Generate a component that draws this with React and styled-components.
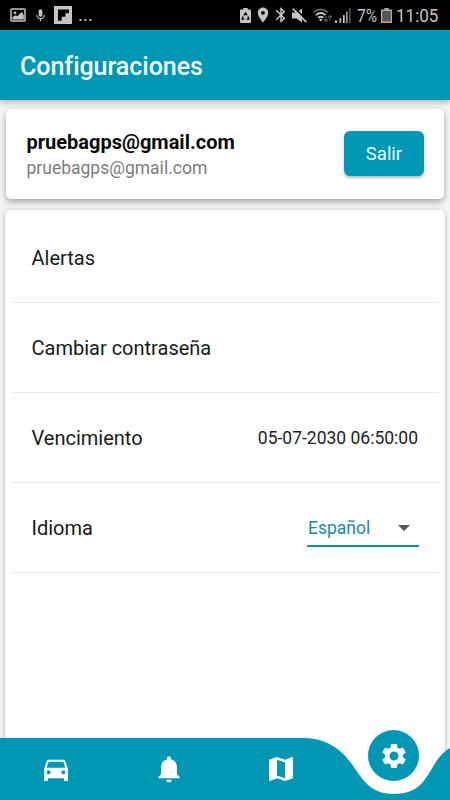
import React from "react";
import styled, { createGlobalStyle } from "styled-components";
import {
  MdDirectionsCar,
  MdNotifications,
  MdMap,
  MdSettings,
  MdLocationOn,
  MdBluetooth,
  MdMic,
} from "react-icons/md";

const TEAL = "#0097b5";

const GlobalStyle = createGlobalStyle`
  * { box-sizing: border-box; }
  body { margin: 0; overflow: hidden; font-family: Roboto, sans-serif; }
`;

const Screen = styled.div`
  width: 450px;
  height: 800px;
  display: flex;
  flex-direction: column;
  background: #f4f4f4;
  position: relative;
  overflow: hidden;
`;

const StatusBar = styled.div`
  height: 30px;
  flex: none;
  display: flex;
  align-items: center;
  justify-content: space-between;
  padding: 0 12px 0 10px;
  background: #000;
  color: #c4c4c4;
`;

const StatusGroup = styled.div`
  display: flex;
  align-items: center;
  height: 30px;
`;

const Glyph = styled.span`
  display: flex;
  align-items: center;
  justify-content: center;
  flex: none;
  width: ${(p) => p.$w}px;
  margin-left: ${(p) => p.$gap || 0}px;
  svg { flex: none; display: block; }
`;

const StatusText = styled.span`
  display: block;
  width: ${(p) => p.$w}px;
  margin-left: ${(p) => p.$gap || 0}px;
  padding-top: 2px;
  font-size: 18.5px;
  line-height: 30px;
  white-space: nowrap;
  transform: scaleX(${(p) => p.$scale});
  transform-origin: left center;
`;

const Dots = styled.span`
  margin-left: 6px;
  font-size: 19px;
  line-height: 28px;
`;

const Header = styled.header`
  height: 70px;
  flex: none;
  display: flex;
  align-items: center;
  padding: 2px 20px 0;
  background: ${TEAL};
  box-shadow: 0 2px 6px rgba(0, 0, 0, 0.3);
  z-index: 1;
`;

const Title = styled.h1`
  margin: 0;
  font-size: 25px;
  font-weight: 500;
  letter-spacing: -0.03px;
  color: #f2fdff;
`;

const Card = styled.section`
  background: #fff;
  border-radius: 5px;
`;

const AccountCard = styled(Card)`
  height: 90px;
  flex: none;
  margin: 9px 6px 0;
  padding: 0 20px;
  display: flex;
  align-items: center;
  justify-content: space-between;
  box-shadow: 0 3px 6px rgba(0, 0, 0, 0.32);
`;

const AccountInfo = styled.div`
  padding: 2px 0 0 0.5px;
`;

const Name = styled.div`
  font-size: 20px;
  line-height: 26px;
  font-weight: 700;
  color: #0a0a0a;
`;

const Email = styled.div`
  font-size: 17.5px;
  line-height: 26px;
  color: #7c7c7c;
`;

const LogoutButton = styled.button`
  width: 80px;
  height: 45px;
  margin-bottom: 1px;
  border: 0;
  padding: 0;
  border-radius: 6px;
  background: ${TEAL};
  color: #eafaff;
  font: 400 18.5px Roboto, sans-serif;
  box-shadow: 0 2px 3px rgba(0, 0, 0, 0.28);
`;

const SettingsCard = styled(Card)`
  flex: 1;
  margin: 11px 5px 0;
  padding: 3px 6px 0 7px;
  box-shadow: 0 1px 4px rgba(0, 0, 0, 0.3);
`;

const Row = styled.div`
  height: 90px;
  display: flex;
  align-items: center;
  justify-content: space-between;
  padding: 0 20px 0 19.5px;
  border-bottom: 1px solid #e8e8e8;
`;

const Label = styled.span`
  font-size: 20px;
  color: #1a1a1a;
`;

const DateValue = styled.span`
  margin-right: 1px;
  font-size: 17.5px;
  color: #222;
`;

const Select = styled.div`
  width: 112px;
  height: 39px;
  display: flex;
  align-items: center;
  justify-content: space-between;
  padding: 2px 9px 0 1px;
  border-bottom: 2px solid #168ba2;
  color: #168ba2;
  font-size: 17.5px;
`;

const NavBar = styled.nav`
  position: absolute;
  left: 0;
  right: 0;
  bottom: 0;
  height: 112px;
  z-index: 2;
`;

const NavShape = styled.svg`
  display: block;
`;

const NavItems = styled.div`
  position: absolute;
  left: 0;
  right: 0;
  bottom: 0;
  height: 62px;
  display: grid;
  grid-template-columns: repeat(4, 112.5px);
  justify-items: center;
  align-items: center;
  color: #fff;
  svg { display: block; }
`;

const ActiveItem = styled.div`
  width: 51px;
  height: 51px;
  margin-top: -27px;
  display: grid;
  place-items: center;
  border-radius: 50%;
  background: ${TEAL};
`;

const rows = [
  { label: "Alertas" },
  { label: "Cambiar contraseña" },
  { label: "Vencimiento", value: "05-07-2030 06:50:00" },
];

function PhotoIcon() {
  return (
    <svg width="16" height="14" viewBox="0 0 16 14">
      <rect x="1" y="1" width="14" height="12" rx="0.8" fill="none" stroke="currentColor" strokeWidth="1.5" />
      <circle cx="5" cy="4.8" r="1.4" fill="currentColor" />
      <path d="M2.5 11.5V9l3-1.8 2 1L11.5 4l2.3 3v4.5z" fill="currentColor" />
    </svg>
  );
}

function FlipIcon() {
  return (
    <svg width="18" height="18" viewBox="0 0 18 18">
      <path d="M0 0h18v18H0z" fill="currentColor" />
      <path d="M4 3.5h11v3.7h-3.6v3.6H7.7v4H4z" fill="#000" />
    </svg>
  );
}

function RecycleBatteryIcon() {
  return (
    <svg width="11" height="15" viewBox="0 0 11 15">
      <path d="M3.3 0h4.4v1.6H10q1 0 1 1V14q0 1-1 1H1q-1 0-1-1V2.6q0-1 1-1h2.3z" fill="currentColor" />
      <path d="M3.9 7.3l1.6-2.3 1.6 2.3M8 8.5l.8 2.6H6.6M3 8.5l-.8 2.6h2.200" fill="none" stroke="#000" strokeWidth="1.3" />
    </svg>
  );
}

function MutedIcon() {
  return (
    <svg width="15" height="15" viewBox="0 0 15 15">
      <path d="M0 4.500h4.500L10 .5v14l-5.500-4H0z" fill="currentColor" />
      <path d="M2.200-.4L15.500 12.900" stroke="#000" strokeWidth="1.600" />
      <path d="M.8.6L14.300 14.100" stroke="currentColor" strokeWidth="1.700" />
    </svg>
  );
}

function WifiIcon() {
  return (
    <svg width="20" height="15" viewBox="0 0 20 15">
      <g fill="none" strokeWidth="1.8">
        <path d="M.6 4.4Q7.7-1.6 14.8 4.4" stroke="#666" />
        <path d="M2.8 7.1Q7.7 3 12.6 7.1" stroke="currentColor" />
        <path d="M5 9.8Q7.7 7.6 10.4 9.8" stroke="currentColor" />
      </g>
      <path d="M5.9 11.5Q7.7 10.2 9.5 11.5L7.7 13.5z" fill="currentColor" />
      <path d="M13 8v5.500m-2-2l2 2 2-2M17 13V7.500m-2 2l2-2 2 2" fill="none" stroke="#555" strokeWidth="1.2" />
    </svg>
  );
}

function SignalIcon() {
  return (
    <svg width="16" height="15" viewBox="0 0 16 15">
      <path d="M0 12.500h2V15H0zM4.500 10h1.700v5H4.500zM8 7h1.700v8H8z" fill="currentColor" />
      <path d="M11 3.500h1.700V15H11z" fill="#999" />
      <path d="M14 0h1.600v15H14z" fill="#555" />
    </svg>
  );
}

function BatteryIcon() {
  return (
    <svg width="11" height="15" viewBox="0 0 11 15">
      <path d="M3.3 0h4.4v1.5H11V15H0V1.5h3.3z" fill="#aaa" />
      <path d="M1.3 3h8.4v10H1.3z" fill="#555" />
      <path d="M1.3 13h8.4v1.2H1.3z" fill="#b9794f" />
    </svg>
  );
}

export default function App() {
  return (
    <Screen>
      <GlobalStyle />
      <StatusBar>
        <StatusGroup>
          <Glyph $w={16}><PhotoIcon /></Glyph>
          <Glyph $w={12} $gap={8.5}><MdMic size={15} /></Glyph>
          <Glyph $w={18} $gap={7.5}><FlipIcon /></Glyph>
          <Dots>...</Dots>
        </StatusGroup>
        <StatusGroup>
          <Glyph $w={11}><RecycleBatteryIcon /></Glyph>
          <Glyph $w={12} $gap={6}><MdLocationOn size={18} /></Glyph>
          <Glyph $w={11} $gap={6}><MdBluetooth size={18} /></Glyph>
          <Glyph $w={15} $gap={6}><MutedIcon /></Glyph>
          <Glyph $w={20} $gap={6}><WifiIcon /></Glyph>
          <Glyph $w={16} $gap={2}><SignalIcon /></Glyph>
          <StatusText $w={21} $gap={6} $scale={0.84}>7%</StatusText>
          <Glyph $w={11} $gap={3}><BatteryIcon /></Glyph>
          <StatusText $w={42} $gap={4} $scale={0.92}>11:05</StatusText>
        </StatusGroup>
      </StatusBar>
      <Header>
        <Title>Configuraciones</Title>
      </Header>
      <AccountCard>
        <AccountInfo>
          <Name>pruebagps@gmail.com</Name>
          <Email>pruebagps@gmail.com</Email>
        </AccountInfo>
        <LogoutButton>Salir</LogoutButton>
      </AccountCard>
      <SettingsCard>
        {rows.map((r) => (
          <Row key={r.label}>
            <Label>{r.label}</Label>
            {r.value && <DateValue>{r.value}</DateValue>}
          </Row>
        ))}
        <Row>
          <Label>Idioma</Label>
          <Select>
            <span>Español</span>
            <svg width="12" height="6" viewBox="0 0 12 6">
              <path d="M0 0h12L6 6z" fill="#555" />
            </svg>
          </Select>
        </Row>
      </SettingsCard>
      <NavBar>
        <NavShape width="450" height="112" viewBox="0 688 450 112">
          <path
            d="M0 738H303C325 738 340 748 351 763C362 778 369 794 394 794C419 794 425 780 434 765Q441 753 450 748V800H0Z"
            fill={TEAL}
          />
        </NavShape>
        <NavItems>
          <MdDirectionsCar size={32} />
          <MdNotifications size={32} />
          <MdMap size={32} />
          <ActiveItem><MdSettings size={30} /></ActiveItem>
        </NavItems>
      </NavBar>
    </Screen>
  );
}
